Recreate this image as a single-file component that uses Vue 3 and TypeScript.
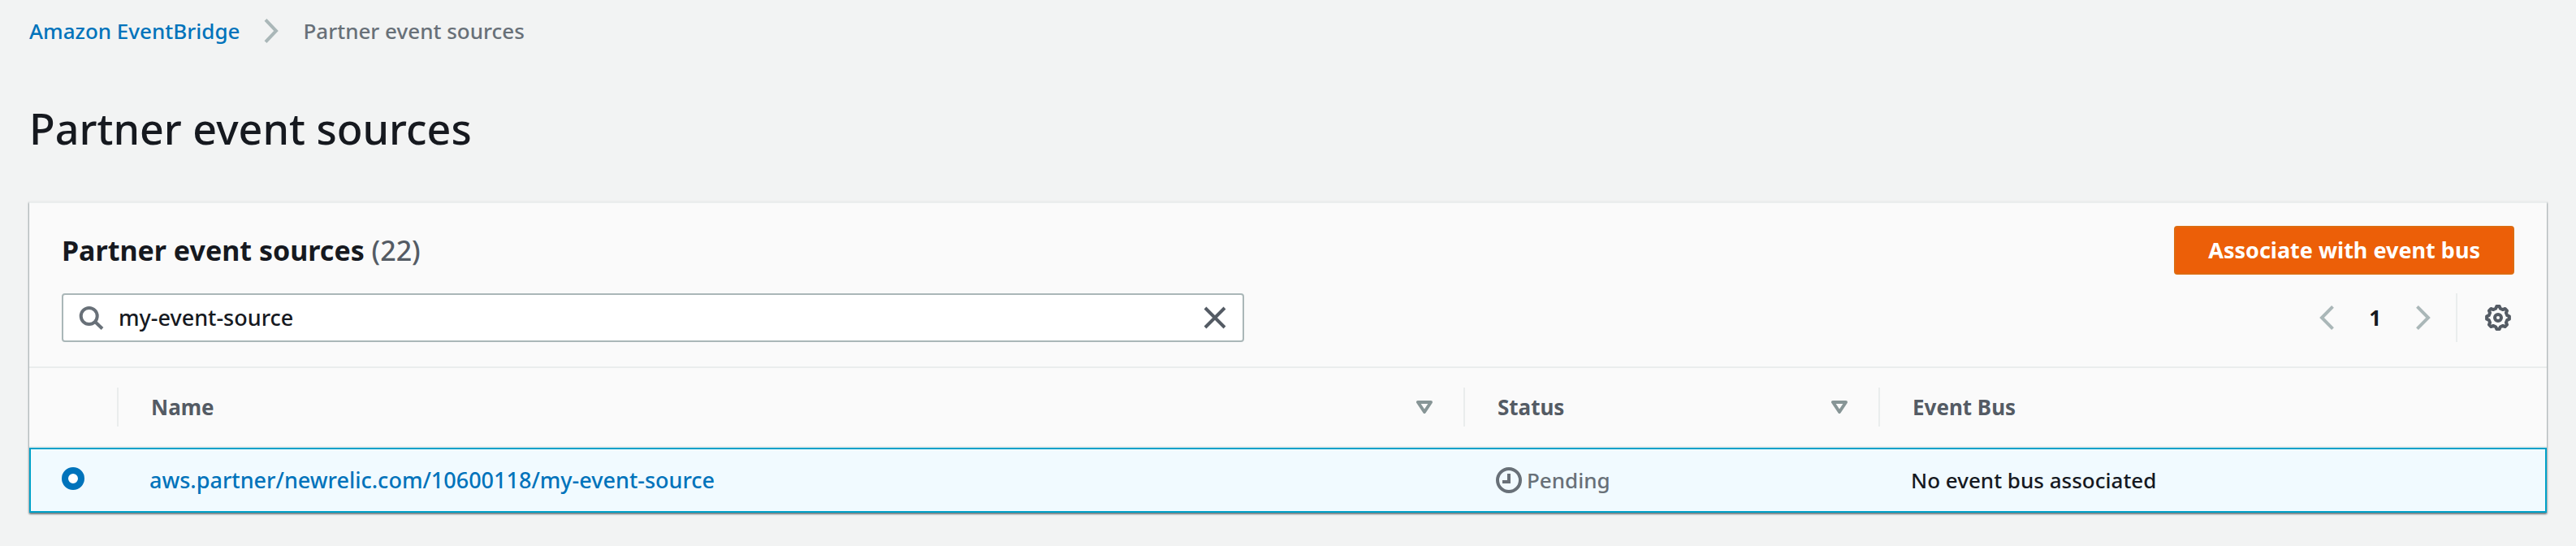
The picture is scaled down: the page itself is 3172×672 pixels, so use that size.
<script setup lang="ts">
import { ref } from 'vue'

interface Source { name: string; status: string; bus: string }
const total = 22
const query = ref('my-event-source')
const selected = ref('aws.partner/newrelic.com/10600118/my-event-source')
const sources: Source[] = [
  { name: 'aws.partner/newrelic.com/10600118/my-event-source', status: 'Pending', bus: 'No event bus associated' },
]

// Outline of an eight-toothed cog centred in a 32 x 32 box.
function cogOutline(): string {
  const points: string[] = []
  for (let tooth = 0; tooth < 8; tooth++) {
    for (const [offset, radius] of [[-7, 14], [7, 14], [14, 11.6], [31, 11.6]]) {
      const angle = ((tooth * 45 + offset) * Math.PI) / 180
      points.push(`${(16 + radius * Math.sin(angle)).toFixed(2)} ${(16 - radius * Math.cos(angle)).toFixed(2)}`)
    }
  }
  return `M${points.join(' L')} Z`
}
const cog = cogOutline()
</script>

<template>
  <main class="page">
    <nav class="crumbs" aria-label="Breadcrumb">
      <a href="#eventbridge">Amazon EventBridge</a>
      <svg class="crumb-sep" viewBox="0 0 18 32" aria-hidden="true"><path d="M2 2.4 L15 16 L2 29.6" /></svg>
      <span>Partner event sources</span>
    </nav>
    <h1>Partner event sources</h1>

    <section class="card">
      <header class="tools">
        <div class="bar">
          <h2>Partner event sources <span class="count">({{ total }})</span></h2>
          <button class="primary" type="button">Associate with event bus</button>
        </div>
        <div class="bar">
          <div class="search">
            <svg class="lens" viewBox="0 0 32 32" aria-hidden="true"><circle cx="13.7" cy="14" r="10" /><path d="M20.5 20.5 L30 29.5" /></svg>
            <input v-model="query" type="text" aria-label="Find event sources" />
            <button class="icon" type="button" aria-label="Clear" @click="query = ''">
              <svg class="cross" viewBox="0 0 32 32"><path d="M4 4 L28 28 M28 4 L4 28" /></svg>
            </button>
          </div>
          <div class="pager">
            <div class="pages">
              <button class="icon" type="button" aria-label="Previous page"><svg class="arrow" viewBox="0 0 32 32"><path d="M23.5 2.4 L10 16 L23.5 29.6" /></svg></button>
              <span class="num">1</span>
              <button class="icon" type="button" aria-label="Next page"><svg class="arrow" viewBox="0 0 32 32"><path d="M8.5 2.4 L22 16 L8.5 29.6" /></svg></button>
            </div>
            <button class="icon prefs" type="button" aria-label="Preferences">
              <svg class="gear" viewBox="0 0 32 32"><path :d="cog" /><circle cx="16" cy="16" r="4" /></svg>
            </button>
          </div>
        </div>
      </header>

      <table>
        <colgroup><col class="c-pick" /><col class="c-name" /><col class="c-status" /><col /></colgroup>
        <thead>
          <tr>
            <th scope="col"><div class="cell"></div></th>
            <th scope="col"><div class="cell">Name<svg class="sort" viewBox="0 0 20 16" aria-hidden="true"><path d="M2 2 H18 L10 14 Z" /></svg></div></th>
            <th scope="col"><div class="cell">Status<svg class="sort" viewBox="0 0 20 16" aria-hidden="true"><path d="M2 2 H18 L10 14 Z" /></svg></div></th>
            <th scope="col"><div class="cell">Event Bus</div></th>
          </tr>
        </thead>
        <tbody>
          <tr v-for="s in sources" :key="s.name">
            <td class="pick"><input v-model="selected" type="radio" name="source" :value="s.name" :aria-label="s.name" /></td>
            <td><a href="#source">{{ s.name }}</a></td>
            <td>
              <span class="status"><svg class="clock" viewBox="0 0 32 32" aria-hidden="true"><circle cx="16" cy="16" r="14" /><path d="M16 8 V18 H8" /></svg>{{ s.status }}</span>
            </td>
            <td>{{ s.bus }}</td>
          </tr>
        </tbody>
      </table>
    </section>
  </main>
</template>

<style>
body { background: #f2f3f3; }
</style>

<style scoped>
* { box-sizing: border-box; }
.page { padding: 16px 36px 40px; font-family: "Noto Sans", "Open Sans", sans-serif; font-size: 26px; font-weight: 500; line-height: 44px; color: #16191f; }
a { color: #0073bb; text-decoration: none; }
svg { display: block; flex: none; fill: none; stroke: currentColor; stroke-width: 4; stroke-linejoin: miter; }
button, input { font: inherit; font-size: 27px; color: inherit; }
.crumbs { display: flex; align-items: center; gap: 30px; color: #687078; }
.crumb-sep { width: 18px; height: 32px; color: #aab7b8; }
h1 { margin: 60px 0 52px; font-size: 52px; line-height: 76px; font-weight: 500; }
.card { background: #fafafa; border-top: 2px solid #eaeded; box-shadow: 0 2px 2px rgba(0, 28, 36, 0.4), 1px 1px 2px rgba(0, 28, 36, 0.2), -1px 1px 2px rgba(0, 28, 36, 0.2); }
.tools { display: grid; gap: 23px; padding: 28px 40px 30px; border-bottom: 2px solid #eaeded; }
.bar { display: flex; align-items: center; justify-content: space-between; height: 60px; }
h2 { margin: 0; font-size: 34px; font-weight: 700; }
.count { font-weight: 500; color: #545b64; }
.primary { height: 60px; padding: 0 40px; border: 2px solid #dd6b10; border-radius: 4px; background: #ec5f08; color: #fff; font-weight: 700; }
.search { display: flex; align-items: center; gap: 18px; width: 48.2%; height: 60px; padding: 0 18px; border: 2px solid #aab7b8; border-radius: 4px; background: #fff; }
.search input { flex: 1; min-width: 0; padding: 0; border: 0; outline: 0; background: transparent; }
.icon { padding: 0; border: 0; background: transparent; }
.lens, .cross, .arrow, .gear, .clock { width: 32px; height: 32px; }
.lens { color: #687078; }
.cross, .gear { color: #545b64; }
.arrow { color: #aab7b8; }
.gear { stroke-linejoin: round; }
.pager { display: flex; align-items: center; gap: 24px; height: 60px; padding-right: 4px; }
.pages { display: flex; align-items: center; gap: 36px; }
.prefs { height: 60px; padding-left: 34px; border-left: 2px solid #eaeded; }
.num { font-weight: 700; }
table { width: 100%; border-collapse: separate; border-spacing: 0; table-layout: fixed; }
.c-pick { width: 110px; }
.c-name { width: 1658px; }
.c-status { width: 511px; }
th { padding: 24px 0; text-align: left; font-weight: 700; color: #545b64; border-bottom: 2px solid #eaeded; }
.cell { display: flex; align-items: center; justify-content: space-between; height: 48px; padding: 0 38px 0 40px; border-right: 2px solid #eaeded; }
th:last-child .cell { border-right: 0; }
.sort { width: 20px; height: 16px; color: #879596; stroke-linejoin: round; }
td { height: 80px; padding: 0 38px; background: #f1faff; border: solid #00a1c9; border-width: 2px 0; }
td a { font-size: 27px; }
td:first-child { border-left-width: 2px; }
td:last-child { border-right-width: 2px; }
td.pick { padding-bottom: 4px; }
.pick input { display: block; appearance: none; width: 28px; height: 28px; margin: 0; border: 8px solid #0073bb; border-radius: 50%; background: #fff; }
.status { display: flex; align-items: center; gap: 6px; color: #687078; }
</style>
